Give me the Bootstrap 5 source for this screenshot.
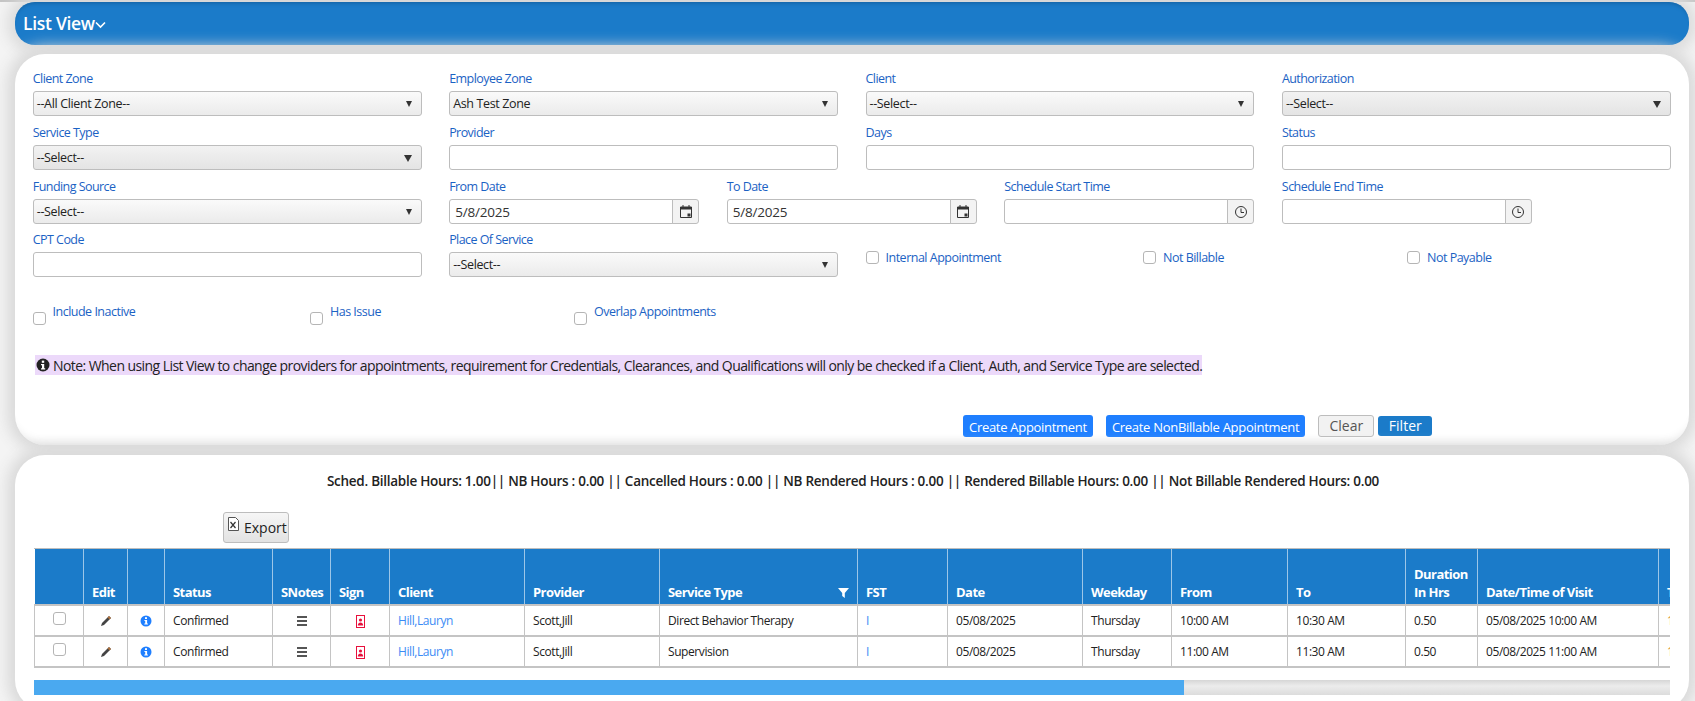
<!DOCTYPE html>
<html lang="en">
<head>
<meta charset="utf-8">
<title>List View</title>
<link href="https://cdn.jsdelivr.net/npm/bootstrap@5.3.0/dist/css/bootstrap.min.css" rel="stylesheet">
<style>
html,body{height:701px;overflow:hidden}
body{background:#f4f4f4;font-family:"Open Sans","Noto Sans",sans-serif;font-size:12px;color:#222;letter-spacing:-.42px}
.page-wrap{padding:2px 6px 0 15px}
.top-edge{height:2px;background:#c4c4c4;margin:-2px -6px 0 -15px}
.head-bar{height:43px;background:#1b7bc9;border-radius:20px;color:#fff;font-size:17.5px;font-weight:600;padding:0 8px;display:flex;align-items:center;box-shadow:inset 0 4px 4px -3px #14609f,0 0 14px 8px #dcdcdc;letter-spacing:-.3px}
.head-bar svg{margin-top:3px}
.pane{background:#fff;border-radius:30px;box-shadow:0 0 14px 8px #dadada}
.filter-pane{margin-top:9px;height:391px;padding:16px 4.5px 0 4px;box-shadow:0 0 14px 8px #dadada,inset 0 -12px 10px -10px #e6e6e6}
.grid-pane{margin-top:10px;height:255px;padding:16px 19px 0;position:relative}
.form-rows{--bs-gutter-x:27.5px;--bs-gutter-y:0;margin:0}
.field{height:54px}
.field.tight{height:53px}
.field-lbl{display:block;height:18px;line-height:18px;margin-bottom:3px;color:#1b62c4;font-size:12.5px;letter-spacing:-.55px;white-space:nowrap}
.fc,.fs{height:25px;padding:0 3px;border:1px solid #bdbdbd;border-radius:3px;font-size:12.5px;color:#222;box-shadow:none;line-height:23px;letter-spacing:-.35px}
.fs{appearance:none;background:#f0f0f0 linear-gradient(#fafafa,#ebebeb);padding-right:20px;display:flex;align-items:center;position:relative;justify-content:space-between}
.fs.dim{background:linear-gradient(#f2f2f2,#e4e4e4)}
.fs-arrow{width:0;height:0;border:3.5px solid transparent;border-top:6px solid #333;border-bottom:0;position:absolute;right:9px;top:9px}
.fs.dim .fs-arrow{border-width:4.5px;border-top-width:7px;border-bottom-width:0}
.date-val{font-size:13.5px;color:#333;padding:0 5px;letter-spacing:-.2px}
.group-box{width:250px;height:25px;flex-wrap:nowrap}
.group-box .fc{height:25px;border-radius:3px 0 0 3px}
.group-box .input-group-text{width:27px;height:25px;padding:0;justify-content:center;background:#f3f3f3;border:1px solid #bdbdbd;border-radius:0 3px 3px 0}
.chk-row{display:flex}
.chk{width:13px;height:13px;margin:0;border:1px solid #b5b5b5;border-radius:3px;flex:none}
.chk-lbl{color:#1b62c4;font-size:12.5px;letter-spacing:-.5px;line-height:18px;white-space:nowrap}
.chk-a{width:277.5px;display:flex;gap:7px;align-items:center}
.chk-b{width:264px;display:flex;gap:7px;align-items:center}
.right-checks{margin-left:13.75px;height:25px;margin-top:14px}
.lower-checks{margin:18px 0 0 13.5px}
.lower-checks .chk-a,.lower-checks .chk-b{align-items:flex-start}
.lower-checks .chk{margin-top:9px}
.note-line{margin:30px 0 0 16px;height:20px}
.note-txt{display:inline-flex;align-items:center;gap:3px;height:20px;background:#ecd9fa;font-size:14px;padding-left:1px;color:#222;letter-spacing:-.567px}
.btn-line{margin:40px 0 0 944px;display:flex;align-items:flex-start;gap:13px}
.b-main{background:#1f7fff;color:#fff;border:0;border-radius:3px;height:22px;padding:0 6px;font-size:13px;line-height:24px;letter-spacing:-.29px;white-space:nowrap}
.b-clear{background:#f2f2f2;border:1px solid #bdbdbd;border-radius:3px;height:22px;width:56px;padding:0;font-size:14px;color:#555;line-height:20px}
.b-filter{background:#1b7bc9;color:#fff;border:0;border-radius:3px;height:20px;width:54px;padding:0;font-size:14px;line-height:20px;margin:1px 0 0 -9px}
.sum-line{text-align:center;font-weight:600;font-size:13.5px;line-height:20px;color:#222;height:20px;letter-spacing:-.27px;margin-right:-2px}
.exp-wrap{margin:21px 0 0 189px;height:36px}
.b-export{display:flex;align-items:center;gap:4px;width:66px;height:31px;padding:0 0 0 3px;background:linear-gradient(#f6f6f6,#e2e2e2);border:1px solid #bdbdbd;border-radius:3px;font-size:14px;color:#222}
.b-export svg{margin-top:-6px}
.grid-clip{width:1636px;overflow:hidden;border-top:1px solid #bdbdbd}
.grid-tbl{table-layout:fixed;width:1760px;margin:0;border-collapse:collapse;font-size:12px}
.grid-tbl th{background:#1b7bc9;color:#fff;font-weight:700;height:56px;padding:0 8px 3px;vertical-align:bottom;line-height:18px;border:0;border-right:1px solid #9cc6e8;border-bottom:2px solid #c4c4c4;position:relative;letter-spacing:-.55px;font-size:13px}
.grid-tbl td{height:31px;padding:0 8px;border:0;border-right:1px solid #c4c4c4;border-bottom:2px solid #c4c4c4;vertical-align:middle;color:#222;white-space:nowrap}
.grid-tbl tr td:first-child{border-left:1px solid #c4c4c4}
.grid-tbl a{color:#3b8bf5;text-decoration:none}
.cen{text-align:center}
.flt{position:absolute;right:8px;bottom:6px}
.warm{color:#d88a2a!important}
.scroll-track{width:1636px;height:15px;margin-top:12px;background:linear-gradient(#d6d6d6,#ececec 40%,#dcdcdc)}
.scroll-thumb{height:15px;background:#4aa9f0}
</style>
</head>
<body>
<div class="page-wrap">
  <div class="top-edge"></div>
  <div class="head-bar">List View<svg width="11" height="8" viewBox="0 0 11 8"><path d="M1 1.5l4.5 4.5L10 1.5" fill="none" stroke="#fff" stroke-width="1.6"/></svg></div>

  <div class="pane filter-pane">
    <div class="row form-rows">
      <div class="col-3 field"><label class="field-lbl">Client Zone</label><div class="fs">--All Client Zone--<span class="fs-arrow"></span></div></div>
      <div class="col-3 field"><label class="field-lbl">Employee Zone</label><div class="fs">Ash Test Zone<span class="fs-arrow"></span></div></div>
      <div class="col-3 field"><label class="field-lbl">Client</label><div class="fs">--Select--<span class="fs-arrow"></span></div></div>
      <div class="col-3 field"><label class="field-lbl">Authorization</label><div class="fs dim">--Select--<span class="fs-arrow"></span></div></div>

      <div class="col-3 field"><label class="field-lbl">Service Type</label><div class="fs dim">--Select--<span class="fs-arrow"></span></div></div>
      <div class="col-3 field"><label class="field-lbl">Provider</label><input class="form-control fc" type="text"></div>
      <div class="col-3 field"><label class="field-lbl">Days</label><input class="form-control fc" type="text"></div>
      <div class="col-3 field"><label class="field-lbl">Status</label><input class="form-control fc" type="text"></div>

      <div class="col-3 field tight"><label class="field-lbl">Funding Source</label><div class="fs">--Select--<span class="fs-arrow"></span></div></div>
      <div class="col-2 field tight"><label class="field-lbl">From Date</label>
        <div class="input-group group-box"><input class="form-control fc date-val" type="text" value="5/8/2025"><span class="input-group-text"><svg width="14" height="15" viewBox="0 0 14 15"><path d="M1.5 3h11v10.5h-11z" fill="none" stroke="#333"/><path d="M1.5 3h11v2.5h-11z" fill="#333"/><path d="M4 1v2M10 1v2" stroke="#333"/><rect x="8.5" y="9.5" width="3" height="3" fill="#333"/></svg></span></div></div>
      <div class="col-2 field tight"><label class="field-lbl">To Date</label>
        <div class="input-group group-box"><input class="form-control fc date-val" type="text" value="5/8/2025"><span class="input-group-text"><svg width="14" height="15" viewBox="0 0 14 15"><path d="M1.5 3h11v10.5h-11z" fill="none" stroke="#333"/><path d="M1.5 3h11v2.5h-11z" fill="#333"/><path d="M4 1v2M10 1v2" stroke="#333"/><rect x="8.5" y="9.5" width="3" height="3" fill="#333"/></svg></span></div></div>
      <div class="col-2 field tight"><label class="field-lbl">Schedule Start Time</label>
        <div class="input-group group-box"><input class="form-control fc" type="text"><span class="input-group-text"><svg width="14" height="14" viewBox="0 0 14 14"><circle cx="7" cy="7" r="5.5" fill="none" stroke="#333"/><path d="M7 3.5V7.5H10" fill="none" stroke="#333"/></svg></span></div></div>
      <div class="col-2 field tight"><label class="field-lbl">Schedule End Time</label>
        <div class="input-group group-box"><input class="form-control fc" type="text"><span class="input-group-text"><svg width="14" height="14" viewBox="0 0 14 14"><circle cx="7" cy="7" r="5.5" fill="none" stroke="#333"/><path d="M7 3.5V7.5H10" fill="none" stroke="#333"/></svg></span></div></div>

      <div class="col-3 field"><label class="field-lbl">CPT Code</label><input class="form-control fc" type="text"></div>
      <div class="col-3 field"><label class="field-lbl">Place Of Service</label><div class="fs">--Select--<span class="fs-arrow"></span></div></div>
      <div class="col-6 p-0">
        <div class="chk-row right-checks">
          <div class="chk-a"><input class="form-check-input chk" type="checkbox"><span class="chk-lbl">Internal Appointment</span></div>
          <div class="chk-b"><input class="form-check-input chk" type="checkbox"><span class="chk-lbl">Not Billable</span></div>
          <div class="chk-b"><input class="form-check-input chk" type="checkbox"><span class="chk-lbl">Not Payable</span></div>
        </div>
      </div>
    </div>

    <div class="chk-row lower-checks">
      <div class="chk-a"><input class="form-check-input chk" type="checkbox"><span class="chk-lbl">Include Inactive</span></div>
      <div class="chk-b"><input class="form-check-input chk" type="checkbox"><span class="chk-lbl">Has Issue</span></div>
      <div class="chk-b"><input class="form-check-input chk" type="checkbox"><span class="chk-lbl">Overlap Appointments</span></div>
    </div>

    <div class="note-line"><span class="note-txt"><svg width="14" height="14" viewBox="0 0 14 14"><circle cx="7" cy="7" r="6.5" fill="#222"/><rect x="5.8" y="2.6" width="2.4" height="2.2" fill="#fff"/><path d="M5 6h3.2v4.3h1v1.2H5v-1.2h1V7.2H5z" fill="#fff"/></svg>Note: When using List View to change providers for appointments, requirement for Credentials, Clearances, and Qualifications will only be checked if a Client, Auth, and Service Type are selected.</span></div>

    <div class="btn-line">
      <button class="btn b-main" type="button">Create Appointment</button>
      <button class="btn b-main" type="button">Create NonBillable Appointment</button>
      <button class="btn b-clear" type="button">Clear</button>
      <button class="btn b-filter" type="button">Filter</button>
    </div>
  </div>

  <div class="pane grid-pane">
    <div class="sum-line">Sched. Billable Hours: 1.00|| NB Hours : 0.00 || Cancelled Hours : 0.00 || NB Rendered Hours : 0.00 || Rendered Billable Hours: 0.00 || Not Billable Rendered Hours: 0.00</div>
    <div class="exp-wrap"><button class="btn b-export" type="button"><svg width="13" height="16" viewBox="0 0 13 16"><path d="M1.5.5h7l3 3v10h-10z" fill="#fff" stroke="#555"/><path d="M3.5 5l5 6M8.5 5l-5 6" stroke="#333" stroke-width="1.2"/></svg>Export</button></div>
    <div class="grid-clip">
      <table class="table grid-tbl">
        <colgroup><col style="width:49px"><col style="width:44px"><col style="width:37px"><col style="width:108px"><col style="width:58px"><col style="width:59px"><col style="width:135px"><col style="width:135px"><col style="width:198px"><col style="width:90px"><col style="width:135px"><col style="width:89px"><col style="width:116px"><col style="width:118px"><col style="width:72px"><col style="width:181px"><col style="width:136px"></colgroup>
        <thead><tr><th></th><th>Edit</th><th></th><th>Status</th><th>SNotes</th><th>Sign</th><th>Client</th><th>Provider</th><th>Service Type<svg class="flt" width="11" height="10" viewBox="0 0 11 10"><path d="M0 0h11L6.8 5v5L4.2 8V5z" fill="#fff"/></svg></th><th>FST</th><th>Date</th><th>Weekday</th><th>From</th><th>To</th><th>Duration In Hrs</th><th>Date/Time of Visit</th><th>Time</th></tr></thead>
        <tbody>
          <tr>
            <td class="cen"><input class="form-check-input chk" type="checkbox"></td>
            <td class="cen"><svg width="12" height="12" viewBox="0 0 12 12"><path d="M9 1l2 2-7 7-3 1 1-3z" fill="#444"/><path d="M9 1l2 2-1.4 1.4-2-2z" fill="#b0703a"/></svg></td>
            <td class="cen"><svg width="12" height="12" viewBox="0 0 12 12"><circle cx="6" cy="6" r="5.5" fill="#1f7fff"/><rect x="5" y="2.2" width="2" height="1.8" fill="#fff"/><path d="M4.4 5h2.7v3.6h.8v1H4.3v-1h.9V6h-.8z" fill="#fff"/></svg></td>
            <td>Confirmed</td>
            <td class="cen"><svg width="12" height="10" viewBox="0 0 12 10"><path d="M1 0h10v2H1zM1 4h10v2H1zM1 8h10v2H1z" fill="#555"/></svg></td>
            <td class="cen"><svg width="9" height="13" viewBox="0 0 9 13"><rect x=".5" y=".5" width="8" height="12" fill="#fff" stroke="#e8103c"/><circle cx="4.5" cy="5" r="1.6" fill="#e8103c"/><path d="M1.8 10.5c0-4 5.4-4 5.4 0z" fill="#e8103c"/></svg></td>
            <td><a href="#">Hill,Lauryn</a></td><td>Scott,Jill</td><td>Direct Behavior Therapy</td><td><a href="#">I</a></td><td>05/08/2025</td><td>Thursday</td><td>10:00 AM</td><td>10:30 AM</td><td>0.50</td><td>05/08/2025 10:00 AM</td><td class="warm">10:00</td>
          </tr>
          <tr>
            <td class="cen"><input class="form-check-input chk" type="checkbox"></td>
            <td class="cen"><svg width="12" height="12" viewBox="0 0 12 12"><path d="M9 1l2 2-7 7-3 1 1-3z" fill="#444"/><path d="M9 1l2 2-1.4 1.4-2-2z" fill="#b0703a"/></svg></td>
            <td class="cen"><svg width="12" height="12" viewBox="0 0 12 12"><circle cx="6" cy="6" r="5.5" fill="#1f7fff"/><rect x="5" y="2.2" width="2" height="1.8" fill="#fff"/><path d="M4.4 5h2.7v3.6h.8v1H4.3v-1h.9V6h-.8z" fill="#fff"/></svg></td>
            <td>Confirmed</td>
            <td class="cen"><svg width="12" height="10" viewBox="0 0 12 10"><path d="M1 0h10v2H1zM1 4h10v2H1zM1 8h10v2H1z" fill="#555"/></svg></td>
            <td class="cen"><svg width="9" height="13" viewBox="0 0 9 13"><rect x=".5" y=".5" width="8" height="12" fill="#fff" stroke="#e8103c"/><circle cx="4.5" cy="5" r="1.6" fill="#e8103c"/><path d="M1.8 10.5c0-4 5.4-4 5.4 0z" fill="#e8103c"/></svg></td>
            <td><a href="#">Hill,Lauryn</a></td><td>Scott,Jill</td><td>Supervision</td><td><a href="#">I</a></td><td>05/08/2025</td><td>Thursday</td><td>11:00 AM</td><td>11:30 AM</td><td>0.50</td><td>05/08/2025 11:00 AM</td><td class="warm">11:00</td>
          </tr>
        </tbody>
      </table>
    </div>
    <div class="scroll-track"><div class="scroll-thumb" style="width:70.3%"></div></div>
  </div>
</div>
</body>
</html>
